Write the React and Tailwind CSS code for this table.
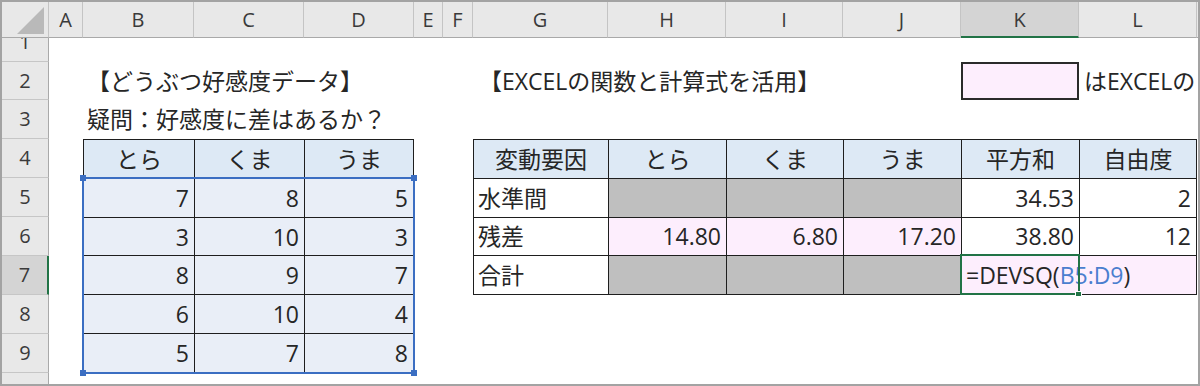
import React from "react";

const SHEET_COLS =
  "grid-cols-[34px_111px_110px_110px_29px_30px_135px_118px_117px_118px_118px_118px_1fr]";

const LETTERS = ["A", "B", "C", "D", "E", "F", "G", "H", "I", "J", "K", "L"];

const ROWS = [
  { n: 1, h: "h-[39px]" },
  { n: 2, h: "h-[38px]" },
  { n: 3, h: "h-[39px]" },
  { n: 4, h: "h-[39px]" },
  { n: 5, h: "h-[39px]" },
  { n: 6, h: "h-[39px]" },
  { n: 7, h: "h-[39px]" },
  { n: 8, h: "h-[39px]" },
  { n: 9, h: "h-[39px]" },
  { n: 10, h: "h-[39px]" },
];

const ANIMALS = ["とら", "くま", "うま"];
const SCORES = [
  [7, 8, 5],
  [3, 10, 3],
  [8, 9, 7],
  [6, 10, 4],
  [5, 7, 8],
];

function ColumnHeader() {
  return (
    <div className="flex h-[36px] shrink-0 bg-[#e8e8e8]">
      <div className="relative w-[47px] shrink-0 border-r border-b border-r-[#c4c4c4] border-b-[#a9a9a9]">
        <svg className="absolute inset-0" width="47" height="36" viewBox="0 0 47 36">
          <polygon points="42,5 42,32 15,32" fill="#b9b9b9" />
        </svg>
      </div>
      <div className={`grid flex-1 ${SHEET_COLS}`}>
        {LETTERS.map((l) =>
          l === "K" ? (
            <div
              key={l}
              className="flex items-center justify-center border-r border-b-2 border-r-[#c4c4c4] border-b-[#217346] bg-[#d4d4d4] pt-[2px] text-[20px] text-[#3a3a3a]"
            >
              {l}
            </div>
          ) : (
            <div
              key={l}
              className="flex items-center justify-center border-r border-b border-r-[#c4c4c4] border-b-[#a9a9a9] pt-px text-[20px] text-[#3a3a3a]"
            >
              {l}
            </div>
          )
        )}
        <div className="border-b border-b-[#a9a9a9]" />
      </div>
    </div>
  );
}

function RowHeader() {
  return (
    <div className="-mt-[15px] flex w-[47px] shrink-0 flex-col">
      {ROWS.map((r) =>
        r.n === 7 ? (
          <div
            key={r.n}
            className={`${r.h} flex shrink-0 items-center justify-center border-r-2 border-b border-r-[#217346] border-b-[#c6c6c6] bg-[#d4d4d4] text-[20px] text-[#3a3a3a]`}
          >
            {r.n}
          </div>
        ) : (
          <div
            key={r.n}
            className={`${r.h} flex shrink-0 items-center justify-center border-r border-b border-r-[#a9a9a9] border-b-[#c6c6c6] bg-[#e8e8e8] text-[20px] text-[#3a3a3a]`}
          >
            {r.n}
          </div>
        )
      )}
    </div>
  );
}

function ScoreTable() {
  return (
    <div className="relative col-span-3 col-start-2 row-span-6 row-start-4 grid grid-cols-[110px_109px_108px] grid-rows-6 gap-px bg-[#1e1e1e] p-px">
      {ANIMALS.map((a) => (
        <div key={a} className="flex items-center justify-center bg-[#dde9f5] pt-px">
          {a}
        </div>
      ))}
      {SCORES.map((row, i) =>
        row.map((v, j) => (
          <div key={`${i}-${j}`} className="flex items-center justify-end bg-[#e9eef7] pr-[5px] pt-px">
            {v}
          </div>
        ))
      )}
      {/* range reference highlight around B5:D9 */}
      <div className="pointer-events-none absolute -left-px top-[38px] -right-px -bottom-px border-2 border-[#3b6ec2]">
        <span className="absolute -left-[4px] -top-[4px] h-[6px] w-[6px] bg-[#3b6ec2]" />
        <span className="absolute -right-[4px] -top-[4px] h-[6px] w-[6px] bg-[#3b6ec2]" />
        <span className="absolute -left-[4px] -bottom-[4px] h-[6px] w-[6px] bg-[#3b6ec2]" />
        <span className="absolute -right-[4px] -bottom-[4px] h-[6px] w-[6px] bg-[#3b6ec2]" />
      </div>
    </div>
  );
}

function Head({ children }) {
  return <div className="flex items-center justify-center bg-[#dde9f5] pt-px">{children}</div>;
}
function Label({ children }) {
  return <div className="flex items-center bg-white pl-[4px] pt-px">{children}</div>;
}
function Num({ children, pink }) {
  return (
    <div className={`flex items-center justify-end pr-[5px] pt-px ${pink ? "bg-[#fdeefd]" : "bg-white"}`}>
      {children}
    </div>
  );
}
function Gray() {
  return <div className="bg-[#bfbfbf]" />;
}

function AnovaTable() {
  return (
    <div className="col-span-6 col-start-7 row-span-4 row-start-4 grid grid-cols-[134px_117px_116px_117px_117px_1fr] grid-rows-4 gap-px bg-[#1e1e1e] p-px">
      <Head>変動要因</Head>
      <Head>とら</Head>
      <Head>くま</Head>
      <Head>うま</Head>
      <Head>平方和</Head>
      <Head>自由度</Head>

      <Label>水準間</Label>
      <Gray />
      <Gray />
      <Gray />
      <Num>34.53</Num>
      <Num>2</Num>

      <Label>残差</Label>
      <Num pink>14.80</Num>
      <Num pink>6.80</Num>
      <Num pink>17.20</Num>
      <Num>38.80</Num>
      <Num>12</Num>

      <Label>合計</Label>
      <Gray />
      <Gray />
      <Gray />
      <div className="relative col-span-2 flex items-center whitespace-nowrap bg-[#fdeefd] pl-[4px] pt-px">
        <span>=DEVSQ(</span>
        <span className="text-[#4a7ecf]">B5:D9</span>
        <span>)</span>
        {/* active cell K7 */}
        <div className="pointer-events-none absolute -left-[2px] -top-[2px] -bottom-[1px] w-[120px] border-2 border-[#217346]">
          <span className="absolute -right-[4px] -bottom-[4px] h-[6px] w-[7px] border border-white bg-[#217346]" />
        </div>
      </div>
    </div>
  );
}

export default function App() {
  return (
    <div className="flex h-[386px] w-[1200px] flex-col overflow-hidden border-2 border-[#a3a3a3] bg-white font-['Open_Sans','Noto_Sans_CJK_JP',sans-serif] text-[23px] leading-none text-[#262626]">
      <ColumnHeader />
      <div className="flex min-h-0 flex-1 overflow-hidden">
        <RowHeader />
        <div
          className={`-mt-[15px] grid flex-1 ${SHEET_COLS} grid-rows-[39px_38px_39px_39px_39px_39px_39px_39px_39px_39px]`}
        >
          <div className="col-span-3 col-start-2 row-start-2 flex items-center whitespace-nowrap pl-[4px]">
            【どうぶつ好感度データ】
          </div>
          <div className="col-span-5 col-start-2 row-start-3 flex items-center whitespace-nowrap pl-[4px]">
            疑問：好感度に差はあるか？
          </div>
          <div className="col-span-4 col-start-7 row-start-2 flex items-center whitespace-nowrap pl-[6px]">
            【EXCELの関数と計算式を活用】
          </div>
          <div className="col-start-11 row-start-2 border-2 border-[#2a2a2a] bg-[#fdeefd]" />
          <div className="col-span-2 col-start-12 row-start-2 flex items-center whitespace-nowrap pl-[5px]">
            はEXCELの
          </div>

          <ScoreTable />
          <AnovaTable />
        </div>
      </div>
    </div>
  );
}
